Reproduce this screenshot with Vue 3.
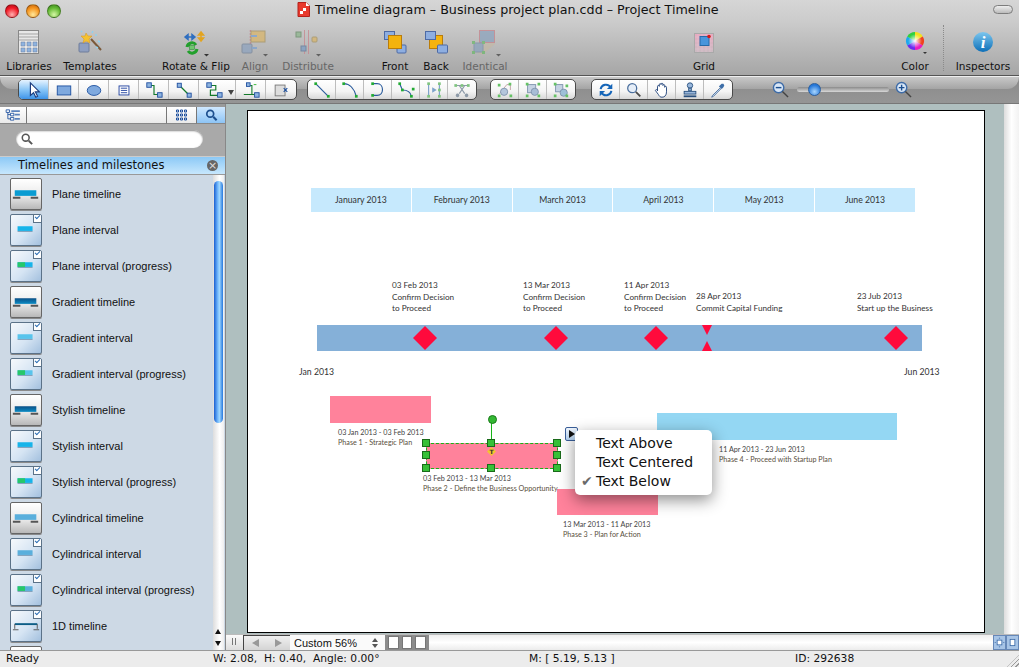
<template>
  <div class="window">
    <header class="toolbar">
      <div class="titlebar">
        <div class="lights">
          <span class="light red"></span>
          <span class="light orange"></span>
          <span class="light green"></span>
        </div>
        <div class="title">
          <svg class="doc" viewBox="0 0 13 15">
            <path d="M1 .5h8l3.500 3.500v10.500h-11.500z" fill="#e8392c" stroke="#b3201a" />
            <path d="M3 9h3v3h-3zM6 6h3v3h-3z" fill="#fff" />
            <path d="M9 .5v3.500h3.500z" fill="#fff" />
          </svg>
          <span>Timeline diagram – Business project plan.cdd – Project Timeline</span>
        </div>
        <span class="pill"></span>
      </div>

      <div class="tools">
        <div class="tool">
          <svg viewBox="0 0 32 28">
            <rect x="5.500" y="2.500" width="20" height="23" fill="#e8e8e8" stroke="#888" />
            <path d="M6 6h19M6 9h19M6 12h19" stroke="#a5a5a5" />
            <path d="M8 14h4v4h-4zM14 14h4v4h-4zM20 14h4v4h-4zM8 20h4v4h-4zM14 20h4v4h-4zM20 20h4v4h-4z" fill="#8eb3df" stroke="#6a7f9c" stroke-width=".5" />
          </svg>
          <span>Libraries</span>
        </div>
        <div class="tool">
          <svg viewBox="0 0 32 28">
            <rect x="5" y="15" width="10" height="9" rx="1" fill="#8f9fc0" stroke="#6e7d9b" />
            <path d="M17 11l10 11" stroke="#7b5a3a" stroke-width="2" />
            <path d="M12 5l2 3 4 0-3 3 1 4-4-2-3 2 1-4-3-3 4 0z" fill="#f5c230" stroke="#d8941d" stroke-width=".5" />
            <path d="M7 3l1 1M19 3l-1 2M24 13l2 1M21 7h2M22 19l2 1" stroke="#8fd2f0" stroke-width="1.500" />
          </svg>
          <span>Templates</span>
        </div>
        <div class="gap"></div>
        <div class="tool">
          <svg viewBox="0 0 32 28">
            <path d="M5 9h10M5 9l3-2.500v5zM15 9l-3-2.500v5z" stroke="#2f6fc0" fill="#2f6fc0" stroke-width="1.500" />
            <path d="M21 4v9M21 4l-2.500 3h5zM21 13l-2.500-3h5z" stroke="#e3a41f" fill="#f3c747" stroke-width="1.500" />
            <path d="M7 19a5 5 0 0 1 9-2M17 21a5 5 0 0 1-9 2" fill="none" stroke="#22a02c" stroke-width="3" />
            <rect x="9.500" y="17.500" width="5" height="4" fill="#6fc76f" stroke="#1e7f2a" stroke-width=".5" />
            <path d="M24 26h5l-2.500 2.500z" fill="#333" />
          </svg>
          <span>Rotate &amp; Flip</span>
        </div>
        <div class="tool off">
          <svg viewBox="0 0 32 28">
            <path d="M11.500 2v24" stroke="#c77a86" stroke-width="1.500" stroke-dasharray="2 1" />
            <rect x="12" y="3" width="14" height="11" fill="#d9b56b" stroke="#a5925f" />
            <rect x="3" y="16" width="10" height="9" rx="1" fill="#8ea3bf" stroke="#74849a" />
            <path d="M18 8h-6M13 20h5" stroke="#7ba0cf" stroke-width="2" />
            <path d="M24 26h5l-2.500 2.500z" fill="#444" />
          </svg>
          <span>Align</span>
        </div>
        <div class="tool off">
          <svg viewBox="0 0 32 28">
            <path d="M12.500 2v24M16.500 2v24" stroke="#c7858d" stroke-width="1" />
            <rect x="4" y="4" width="5" height="5" fill="#8db58d" stroke="#678a67" />
            <rect x="9" y="18" width="5" height="5" fill="#7d9cc3" stroke="#61799a" />
            <rect x="20" y="9" width="5" height="5" rx="1" fill="#d9b56b" stroke="#a5925f" />
            <path d="M24 26h5l-2.500 2.500z" fill="#444" />
          </svg>
          <span>Distribute</span>
        </div>
        <div class="gap"></div>
        <div class="tool">
          <svg viewBox="0 0 32 28">
            <rect x="5.500" y="3.500" width="10" height="8" fill="#8eaee0" stroke="#4d6aa5" />
            <rect x="18" y="17" width="9" height="8" rx="1" fill="#8eaee0" stroke="#4d6aa5" />
            <rect x="9.500" y="7.500" width="13" height="13" fill="#f4b30e" stroke="#b97c0a" />
          </svg>
          <span>Front</span>
        </div>
        <div class="tool">
          <svg viewBox="0 0 32 28">
            <rect x="9.500" y="7.500" width="13" height="13" fill="#f4b30e" stroke="#b97c0a" />
            <rect x="5.500" y="3.500" width="10" height="8" fill="#8eaee0" stroke="#4d6aa5" />
            <rect x="17.500" y="17" width="10" height="8" rx="1" fill="#8eaee0" stroke="#4d6aa5" />
          </svg>
          <span>Back</span>
        </div>
        <div class="tool off">
          <svg viewBox="0 0 32 28">
            <path d="M7 24L17 8h9v8L13 27z" fill="#c9b89a" opacity=".6" />
            <rect x="10.500" y="2.500" width="15" height="12" fill="#8ca3bd" stroke="#c4828a" />
            <rect x="5" y="15" width="9" height="9" fill="#8ca3bd" stroke="#7a8ea6" />
            <path d="M3 13h3v3h-3zM13 13h3v3h-3zM3 23h3v3h-3zM13 23h3v3h-3z" fill="#6cb76c" />
            <path d="M27 26h5l-2.500 2.500z" fill="#444" />
          </svg>
          <span>Identical</span>
        </div>
        <div class="gap"></div>
        <div class="tool">
          <svg viewBox="0 0 32 28">
            <defs>
              <linearGradient id="gridFade" x1="0" y1="0" x2="0" y2="1">
                <stop offset="0" stop-color="#e9a9c0" />
                <stop offset="1" stop-color="#c9bcc2" />
              </linearGradient>
            </defs>
            <rect x="6.500" y="5.500" width="19" height="19" fill="url(#gridFade)" stroke="#a9a9a9" />
            <path d="M7 9h18M7 13h18M7 17h18M7 21h18M10 6v18M14 6v18M18 6v18M22 6v18" stroke="#e6c2d0" stroke-width=".5" />
            <rect x="12" y="8.500" width="9" height="9" fill="#4a95dc" stroke="#276aa8" />
            <circle cx="21" cy="8.500" r="1.800" fill="#d01818" />
          </svg>
          <span>Grid</span>
        </div>
        <div class="gap"></div>
        <div class="tool">
          <svg viewBox="0 0 32 28">
            <defs>
              <radialGradient id="wheelWhite">
                <stop offset="0" stop-color="#fff" />
                <stop offset="1" stop-color="#fff" stop-opacity="0" />
              </radialGradient>
            </defs>
            <path d="M16 13V4a9 9 0 0 1 7.800 4.500z" fill="#f3e21d" />
            <path d="M16 13l7.800-4.500a9 9 0 0 1 0 9z" fill="#f0431d" />
            <path d="M16 13l7.800 4.500A9 9 0 0 1 16 22z" fill="#e71dbf" />
            <path d="M16 13v9a9 9 0 0 1-7.800-4.500z" fill="#6a2df0" />
            <path d="M16 13l-7.800 4.500a9 9 0 0 1 0-9z" fill="#1ea8ee" />
            <path d="M16 13L8.200 8.500A9 9 0 0 1 16 4z" fill="#2fd03f" />
            <circle cx="16" cy="13" r="7" fill="url(#wheelWhite)" />
            <path d="M24 24h4l-2 2z" fill="#333" />
          </svg>
          <span>Color</span>
        </div>
        <div class="divider"></div>
        <div class="tool">
          <svg viewBox="0 0 32 28">
            <defs>
              <linearGradient id="infoBlue" x1="0" y1="0" x2="0" y2="1">
                <stop offset="0" stop-color="#7cc6ee" />
                <stop offset="1" stop-color="#0d6fb8" />
              </linearGradient>
            </defs>
            <circle cx="16" cy="14" r="10" fill="url(#infoBlue)" />
            <text x="16" y="20" class="info-i">i</text>
          </svg>
          <span>Inspectors</span>
        </div>
      </div>
    </header>

    <nav class="strip">
      <div class="seg first">
        <button class="cell on">
          <svg viewBox="0 0 20 20"><path d="M6 2v14l3.500-3 2.500 5 2-1-2.500-5h4.500z" fill="#fff" stroke="#1f3f80" stroke-width="1.300" /></svg>
        </button>
        <button class="cell">
          <svg viewBox="0 0 20 20"><rect x="2.500" y="5.500" width="15" height="10" fill="#7fa9de" stroke="#1d4f9e" /></svg>
        </button>
        <button class="cell">
          <svg viewBox="0 0 20 20"><ellipse cx="10" cy="10.500" rx="7.500" ry="5.500" fill="#7fa9de" stroke="#1d4f9e" /></svg>
        </button>
        <button class="cell">
          <svg viewBox="0 0 20 20"><rect x="4.500" y="5.500" width="11" height="10" fill="#fff" stroke="#1d3f9e" /><path d="M6.500 8h7M6.500 10.500h7M6.500 13h7" stroke="#1d3f9e" /></svg>
        </button>
        <button class="cell">
          <svg viewBox="0 0 20 20"><path d="M5 5h5v10h6" fill="none" stroke="#137a2a" stroke-width="1.300" /><rect x="2" y="2" width="5" height="5" fill="#8fb4e0" stroke="#1f4f9f" /><rect x="14" y="13" width="5" height="5" fill="#8fb4e0" stroke="#1f4f9f" /></svg>
        </button>
        <button class="cell">
          <svg viewBox="0 0 20 20"><path d="M5 5l10 10" stroke="#137a2a" stroke-width="1.300" /><rect x="2.500" y="2.500" width="4.500" height="4.500" fill="#8fb4e0" stroke="#1f4f9f" /><rect x="13.500" y="13.500" width="4.500" height="4.500" fill="#8fb4e0" stroke="#1f4f9f" /></svg>
        </button>
        <button class="cell wide">
          <svg viewBox="0 0 20 20"><path d="M5 5h7v5h-6v6h9" fill="none" stroke="#137a2a" stroke-width="1.300" /><rect x="2" y="2" width="5" height="5" fill="#8fb4e0" stroke="#1f4f9f" /><rect x="14" y="13" width="5" height="5" fill="#8fb4e0" stroke="#1f4f9f" /></svg>
          <i class="drop"></i>
        </button>
        <button class="cell">
          <svg viewBox="0 0 20 20"><path d="M9 5h2v10h3M2 15h9" fill="none" stroke="#137a2a" stroke-width="1.200" /><rect x="5" y="2" width="4" height="4" fill="#8fb4e0" stroke="#1f4f9f" /><rect x="14" y="13" width="5" height="5" fill="#8fb4e0" stroke="#1f4f9f" /><path d="M13 4h3" stroke="#2cb52c" /></svg>
        </button>
        <button class="cell">
          <svg viewBox="0 0 20 20"><rect x="3.500" y="4.500" width="11" height="12" fill="#ddd" stroke="#777" /><path d="M13 8l4 4M17 8l-4 4" stroke="#1d4f9e" stroke-width="1.300" /></svg>
        </button>
      </div>

      <div class="seg second">
        <button class="cell small" v-for="t in lineTools" :key="t.d">
          <svg viewBox="0 0 20 20">
            <path :d="t.d" fill="none" :stroke="t.stroke" stroke-width="1.300" />
            <path v-if="t.extra" :d="t.extra" :fill="t.stroke" />
            <rect v-for="n in t.nodes" :key="n.join()" :x="n[0] - 1.500" :y="n[1] - 1.500" width="3" height="3" :fill="t.green" />
          </svg>
        </button>
      </div>

      <div class="seg third">
        <button class="cell small">
          <svg viewBox="0 0 20 20"><path d="M4 14L12 4h4v6" fill="none" stroke="#c0a0a0" /><circle cx="9" cy="12" r="4" fill="#b4c6dc" stroke="#7e93ad" /><path d="M2 3h3v3h-3zM14 2h3v3h-3zM2 15h3v3h-3zM15 15h3v3h-3z" fill="#66c266" /></svg>
        </button>
        <button class="cell small">
          <svg viewBox="0 0 20 20"><rect x="4" y="4" width="9" height="9" fill="#c6d3e4" stroke="#7e93ad" /><circle cx="12" cy="12" r="4" fill="#a8bdd6" stroke="#7e93ad" /><path d="M2 2h3v3h-3zM15 2h3v3h-3zM2 15h3v3h-3zM15 15h3v3h-3z" fill="#66c266" /></svg>
        </button>
        <button class="cell small">
          <svg viewBox="0 0 20 20"><rect x="4" y="4" width="8" height="8" fill="#c6d3e4" stroke="#7e93ad" /><circle cx="13" cy="13" r="4" fill="#9ec0d8" stroke="#7e93ad" /><path d="M2 2h3v3h-3zM15 4h3v3h-3zM2 15h3v3h-3zM15 15h3v3h-3z" fill="#66c266" /></svg>
        </button>
      </div>

      <div class="seg fourth">
        <button class="cell small">
          <svg viewBox="0 0 20 20"><path d="M4 9a6 6 0 0 1 11-2M16 11a6 6 0 0 1-11 2" fill="none" stroke="#1565b8" stroke-width="2.200" /><path d="M17 3v6h-6zM3 17v-6h6z" fill="#1565b8" /></svg>
        </button>
        <button class="cell small">
          <svg viewBox="0 0 20 20"><circle cx="8" cy="8" r="5" fill="#e6eef8" stroke="#4b6f9e" stroke-width="1.400" /><path d="M12 12l5 5" stroke="#4a4a4a" stroke-width="2" /></svg>
        </button>
        <button class="cell small">
          <svg viewBox="0 0 20 20"><path d="M5 11V6a1 1 0 0 1 2 0V4a1 1 0 0 1 2 0v-.500a1 1 0 0 1 2 0V5a1 1 0 0 1 2 0v2a1 1 0 0 1 2 0v5c0 4-2 6-5 6-2 0-3-1-4-3l-3-4c-1-1 1-2 2-1z" fill="#fff" stroke="#1d3f78" /></svg>
        </button>
        <button class="cell small">
          <svg viewBox="0 0 20 20"><circle cx="10" cy="5" r="3" fill="#9ab8dc" stroke="#28507f" /><path d="M8.500 8h3v3h-3z" fill="#9ab8dc" stroke="#28507f" /><rect x="3.500" y="11.500" width="13" height="3" fill="#9ab8dc" stroke="#28507f" /><rect x="3" y="16" width="14" height="2" fill="#28507f" /></svg>
        </button>
        <button class="cell small">
          <svg viewBox="0 0 20 20"><path d="M4 16l-1 2 2-1 8-8-1-1z" fill="#d6e4f4" stroke="#4a6f9e" /><path d="M11 6l3 3 1-1 1-1 1-2-1-2-2 0-2 2z" fill="#3d6ea8" /></svg>
        </button>
      </div>

      <div class="zoomer">
        <svg class="lens" viewBox="0 0 18 18"><circle cx="7" cy="7" r="5.500" fill="#d8e6f6" stroke="#3e6ca8" stroke-width="1.500" /><path d="M4 7h6" stroke="#1c4f90" stroke-width="1.500" /><path d="M11 11l6 6" stroke="#444" stroke-width="1.500" /></svg>
        <div class="slider"><span class="thumb"></span></div>
        <svg class="lens" viewBox="0 0 18 18"><circle cx="7" cy="7" r="5.500" fill="#d8e6f6" stroke="#3e6ca8" stroke-width="1.500" /><path d="M4 7h6M7 4v6" stroke="#1c4f90" stroke-width="1.500" /><path d="M11 11l6 6" stroke="#444" stroke-width="1.500" /></svg>
      </div>
    </nav>

    <main class="body">
      <aside class="sidebar">
        <div class="tabs">
          <div class="tab tree">
            <svg viewBox="0 0 18 14"><path d="M1 1h4v3h-4zM6 5h4v3h-4zM6 10h4v3h-4z" fill="#fff" stroke="#1d4f9e" /><path d="M3 4v7.500h3M3 6.500h3" fill="none" stroke="#1d4f9e" /><path d="M7 2.500h10M11 6.500h6M11 11.500h6" stroke="#5b82bd" stroke-width="2" /></svg>
          </div>
          <div class="tab grow"></div>
          <div class="tab grid">
            <svg viewBox="0 0 12 12"><path d="M1 1h2v2h-2zM5 1h2v2h-2zM9 1h2v2h-2zM1 5h2v2h-2zM5 5h2v2h-2zM9 5h2v2h-2zM1 9h2v2h-2zM5 9h2v2h-2zM9 9h2v2h-2z" fill="none" stroke="#1d4f9e" /></svg>
          </div>
          <div class="tab find">
            <svg viewBox="0 0 14 14"><circle cx="5.500" cy="5.500" r="4" fill="none" stroke="#1d4f8e" stroke-width="2" /><path d="M9 9l4 4" stroke="#1d4f8e" stroke-width="2.500" /></svg>
          </div>
        </div>
        <div class="searchbar">
          <div class="search">
            <svg viewBox="0 0 14 14"><circle cx="5.500" cy="5.500" r="4" fill="none" stroke="#555" stroke-width="1.800" /><path d="M9 9l4 4" stroke="#555" stroke-width="2.200" /></svg>
          </div>
        </div>
        <div class="lib-head">
          <span>Timelines and milestones</span>
          <i class="lib-close">×</i>
        </div>
        <div class="lib">
          <ul class="items">
            <li v-for="(item, i) in items" :key="i" class="item">
              <div class="tile" :class="item.kind">
                <svg viewBox="0 0 32 32">
                  <defs>
                    <linearGradient id="gradBar" x1="0" y1="0" x2="0" y2="1">
                      <stop offset="0" stop-color="#0a4f86" />
                      <stop offset="1" stop-color="#0d8cc4" />
                    </linearGradient>
                  </defs>
                  <template v-if="item.kind === 'timeline'">
                    <rect x="4" y="12" width="23" height="6" :fill="item.fill" />
                    <path d="M2 20h8M21 20h8" stroke="#555" stroke-width="2" />
                  </template>
                  <template v-else-if="item.kind === 'line'">
                    <path d="M4 14h24" stroke="#0c5d86" stroke-width="2" />
                    <path d="M4 14v5M28 14v5M2 20h6M24 20h6" stroke="#555" />
                  </template>
                  <template v-else>
                    <rect x="7" y="12" width="16" height="5" :fill="item.fill" />
                    <rect x="7" y="17" width="16" height="1" fill="#7a9ab5" />
                    <rect v-if="item.kind === 'progress'" x="7" y="12" width="8" height="5" fill="#27c76a" />
                  </template>
                </svg>
                <span v-if="item.kind !== 'timeline'" class="badge"></span>
              </div>
              <span v-if="item.name" class="item-name">{{ item.name }}</span>
            </li>
          </ul>
          <div class="vscroll">
            <div class="vtrack"><span class="vthumb"></span></div>
            <span class="arrow up"></span>
            <span class="arrow down"></span>
          </div>
        </div>
      </aside>

      <section class="work">
        <div class="stage-row">
          <div class="stage">
            <div class="page">
              <div class="months">
                <span v-for="m in months" :key="m">{{ m }}</span>
              </div>

              <div
                v-for="s in milestones"
                :key="s.x"
                class="note"
                :style="{ left: s.x - 248 + 'px', top: s.y - 111 + 'px' }"
              >
                <div v-for="l in s.lines" :key="l">{{ l }}</div>
              </div>

              <div class="band">
                <span v-for="x in diamonds" :key="x" class="diamond" :style="{ left: x - 317 - 12 + 'px' }"></span>
                <span class="tri top"></span>
                <span class="tri bottom"></span>
              </div>

              <div class="end-label start">Jan 2013</div>
              <div class="end-label end">Jun 2013</div>

              <div
                v-for="p in phases"
                :key="p.name"
                class="phase"
                :class="p.color"
                :style="{ left: p.x - 248 + 'px', top: p.y - 111 + 'px', width: p.w + 'px', height: p.h + 'px' }"
              ></div>
              <div
                v-for="p in phases"
                :key="p.name + 'l'"
                class="phase-label"
                :style="{ left: p.tx - 248 + 'px', top: p.ty - 111 + 'px' }"
              >
                <div>{{ p.date }}</div>
                <div class="phase-name">{{ p.name }}</div>
              </div>

              <div class="selection">
                <span class="rot-line"></span>
                <span class="rot-knob"></span>
                <span v-for="h in handles" :key="h" class="handle" :class="h"></span>
                <span class="text-mark">T</span>
              </div>

              <span class="menu-btn"></span>
              <div class="menu">
                <div class="menu-row">Text Above</div>
                <div class="menu-row">Text Centered</div>
                <div class="menu-row checked">Text Below</div>
              </div>
            </div>
          </div>
          <div class="rscroll"></div>
        </div>
        <div class="pagebar">
          <span class="pause"></span>
          <div class="pager">
            <span class="tri-l"></span>
            <span class="tri-r"></span>
          </div>
          <div class="zoomsel">
            <span>Custom 56%</span>
            <span class="updown"><i></i><i></i></span>
          </div>
          <div class="views"><i></i><i></i><i></i></div>
          <div class="hscroll"></div>
          <div class="fitbtn">
            <svg viewBox="0 0 14 14"><rect x="4" y="4" width="6" height="6" fill="#fff" stroke="#3465a4" /><path d="M7 1v1M7 12v1M1 7h1M12 7h1" stroke="#3465a4" stroke-width="1.500" /></svg>
          </div>
          <div class="fitbtn">
            <svg viewBox="0 0 14 14"><rect x="4" y="3" width="6" height="8" fill="#fff" stroke="#3465a4" /></svg>
          </div>
        </div>
      </section>
    </main>

    <footer class="status">
      <span>Ready</span>
      <span>W: 2.08,&nbsp; H: 0.40,&nbsp; Angle: 0.00°</span>
      <span>M: [ 5.19, 5.13 ]</span>
      <span>ID: 292638</span>
      <i class="grip"></i>
    </footer>
  </div>
</template>

<script setup>
const green = '#22aa33'
const pale = '#7fc47f'
const blueLine = '#2b5c9c'

const lineTools = [
  { d: 'M3 3l14 14', nodes: [[3, 3], [17, 17]], stroke: blueLine, green },
  { d: 'M3 3c7 0 12 6 14 14', nodes: [[3, 3], [17, 17]], stroke: blueLine, green },
  { d: 'M4 3h5c8 0 8 13 0 13h-5', nodes: [[4, 3], [4, 16]], stroke: blueLine, green },
  { d: 'M3 3l3 7c5 0 9 2 10 7', nodes: [[3, 3], [6, 10], [16, 17], [18, 9]], stroke: blueLine, green },
  {
    d: 'M4 3v14M16 3v14',
    extra: 'M8 7l5 3-5 3z',
    nodes: [[4, 3], [4, 17], [16, 3], [16, 10], [16, 17]],
    stroke: '#7fa3cc',
    green: pale
  },
  {
    d: 'M7 5l6 9M13 5l-6 9M3 5h14',
    extra: 'M5 14a2 2 0 1 0 .100 0zM15 14a2 2 0 1 0 .100 0z',
    nodes: [[3, 5], [17, 5], [10, 5]],
    stroke: '#8d9aa8',
    green: pale
  }
]

const plain = '#0a9cd2'
const light = '#16b4ea'
const grad = 'url(#gradBar)'
const cyl = '#5aafdc'

const items = [
  { name: 'Plane timeline', kind: 'timeline', fill: plain },
  { name: 'Plane interval', kind: 'interval', fill: light },
  { name: 'Plane interval (progress)', kind: 'progress', fill: light },
  { name: 'Gradient timeline', kind: 'timeline', fill: grad },
  { name: 'Gradient interval', kind: 'interval', fill: '#58c4ec' },
  { name: 'Gradient interval (progress)', kind: 'progress', fill: '#58c4ec' },
  { name: 'Stylish timeline', kind: 'timeline', fill: grad },
  { name: 'Stylish interval', kind: 'interval', fill: light },
  { name: 'Stylish interval (progress)', kind: 'progress', fill: light },
  { name: 'Cylindrical timeline', kind: 'timeline', fill: cyl },
  { name: 'Cylindrical interval', kind: 'interval', fill: cyl },
  { name: 'Cylindrical interval (progress)', kind: 'progress', fill: cyl },
  { name: '1D timeline', kind: 'line', fill: '' },
  // only the top edge of this one shows above the status bar
  { name: '', kind: 'timeline', fill: plain }
]

const months = ['January 2013', 'February 2013', 'March 2013', 'April 2013', 'May 2013', 'June 2013']

const milestones = [
  { x: 392, y: 280, lines: ['03 Feb 2013', 'Confirm Decision', 'to Proceed'] },
  { x: 523, y: 280, lines: ['13 Mar 2013', 'Confirm Decision', 'to Proceed'] },
  { x: 624, y: 280, lines: ['11 Apr 2013', 'Confirm Decision', 'to Proceed'] },
  { x: 696, y: 291, lines: ['28 Apr 2013', 'Commit Capital Funding'] },
  { x: 857, y: 291, lines: ['23 Jub 2013', 'Start up the Business'] }
]

const diamonds = [425, 556, 656, 896]

const phases = [
  { x: 330, y: 396, w: 101, h: 27, color: 'pink', tx: 338, ty: 428, date: '03 Jan 2013 - 03 Feb 2013', name: 'Phase 1 - Strategic Plan' },
  { x: 426, y: 443, w: 132, h: 26, color: 'pink', tx: 423, ty: 474, date: '03 Feb 2013 - 13 Mar 2013', name: 'Phase 2 - Define the Business Opportunity' },
  { x: 557, y: 489, w: 101, h: 26, color: 'pink', tx: 563, ty: 520, date: '13 Mar 2013 - 11 Apr 2013', name: 'Phase 3 - Plan for Action' },
  { x: 657, y: 413, w: 240, h: 27, color: 'blue', tx: 719, ty: 445, date: '11 Apr 2013 - 23 Jun 2013', name: 'Phase 4 - Proceed with Startup Plan' }
]

const handles = ['tl', 'tc', 'tr', 'ml', 'mr', 'bl', 'bc', 'br']
</script>

<style>
html,
body {
  margin: 0;
  background: #9a9a9a;
  overflow: hidden;
}
</style>

<style scoped>
.window {
  width: 1019px;
  height: 667px;
  display: flex;
  flex-direction: column;
  font-family: "DejaVu Sans", "Liberation Sans", sans-serif;
  color: #111;
  overflow: hidden;
}

/* top chrome */
.toolbar {
  height: 76px;
  flex: none;
  background: linear-gradient(#d6d6d6, #cbcbcb 30%, #a6a6a6);
  border-bottom: 1px solid #555;
  box-sizing: border-box;
}

.titlebar {
  height: 22px;
  display: flex;
  align-items: center;
  position: relative;
}

.lights {
  display: flex;
  gap: 7px;
  padding-left: 5px;
}

.light {
  width: 14px;
  height: 14px;
  border-radius: 50%;
  border: 1px solid rgba(0, 0, 0, 0.3);
  box-sizing: border-box;
}

.red { background: radial-gradient(circle at 50% 80%, #ffb0b0, #f01824 60%, #a50f18); }
.orange { background: radial-gradient(circle at 50% 80%, #ffe89a, #f5921a 60%, #bb600f); }
.green { background: radial-gradient(circle at 50% 80%, #d5f7a5, #62b832 60%, #3c8420); }

.title {
  position: absolute;
  left: 297px;
  top: 2px;
  display: flex;
  align-items: center;
  gap: 5px;
  font-size: 12.700px;
  white-space: nowrap;
}

.doc {
  width: 13px;
  height: 15px;
}

.pill {
  position: absolute;
  right: 6px;
  top: 5px;
  width: 20px;
  height: 9px;
  box-sizing: border-box;
  border: 1px solid #7d7d7d;
  border-radius: 5px;
  background: linear-gradient(#eee, #bbb);
}

.tools {
  display: grid;
  grid-template-columns: 58px 64px 34px 80px 38px 68px 33px 40px 42px 56px 161px 60px 156px 50px 7px 72px;
  height: 53px;
  font-size: 10.500px;
}

.tool {
  display: flex;
  flex-direction: column;
  align-items: center;
  white-space: nowrap;
  padding-top: 6px;
  box-sizing: border-box;
}

.tool svg {
  width: 32px;
  height: 28px;
  flex: none;
  overflow: visible;
}

.tool span {
  margin-top: 4px;
  line-height: 13px;
}

.divider {
  margin: 3px 0 4px 3px;
  width: 0;
  border-left: 1px dotted #8a8a8a;
}

.off {
  color: #666;
}

.off svg {
  opacity: 0.75;
}

.info-i {
  font: italic bold 17px "Liberation Serif", serif;
  fill: #fff;
  text-anchor: middle;
}

/* second toolbar */
.strip {
  height: 28px;
  flex: none;
  position: relative;
  display: flex;
  align-items: flex-start;
  padding: 2px 0 0 18px;
  box-sizing: border-box;
  background: linear-gradient(#8a8a8a, #959595);
  border-top: 1px solid #eee;
  border-bottom: 1px solid #777;
}

/* the lighter band that curves in at both ends */
.strip::before {
  content: "";
  position: absolute;
  left: 0;
  right: 0;
  top: 0;
  height: 12px;
  border-radius: 0 0 16px 16px;
  background: linear-gradient(#c8c8c8, #a4a4a4);
}

.seg {
  display: flex;
  height: 19px;
  border: 1px solid #4a4a4a;
  border-radius: 5px;
  background: linear-gradient(#fff, #f4f4f4 60%, #d8d8d8);
  overflow: hidden;
  flex: none;
  position: relative;
}

.second { margin-left: 10px; }
.third { margin-left: 13px; }
.fourth { margin-left: 15px; }

.cell {
  width: 30px;
  height: 19px;
  padding: 0;
  border: 0;
  border-right: 1px solid #bdbdbd;
  background: none;
  display: flex;
  align-items: center;
  justify-content: center;
  position: relative;
  flex: none;
}

.cell:last-child {
  border-right: 0;
}

.cell svg {
  width: 18px;
  height: 18px;
}

.cell.small {
  width: 28px;
}

.cell.wide {
  width: 37px;
  justify-content: flex-start;
  padding-left: 6px;
  box-sizing: border-box;
}

.cell.on {
  background: linear-gradient(#e6f3ff, #82c2f6 55%, #3f94e8);
}

.drop {
  position: absolute;
  right: 1px;
  bottom: 4px;
  border: 3.500px solid transparent;
  border-top: 5px solid #444;
  border-bottom: 0;
}

.zoomer {
  display: flex;
  align-items: center;
  margin-left: 39px;
  height: 21px;
  position: relative;
}

.lens {
  width: 17px;
  height: 17px;
  overflow: visible;
}

.slider {
  width: 92px;
  height: 5px;
  margin: 0 6px 0 8px;
  border-radius: 3px;
  background: linear-gradient(#8a8a8a, #d8d8d8);
  position: relative;
}

.thumb {
  position: absolute;
  left: 11px;
  top: -4px;
  width: 13px;
  height: 13px;
  border-radius: 50%;
  background: radial-gradient(circle at 50% 70%, #a8d6ff, #2476d8 70%);
  border: 1px solid #2b5f9f;
  box-sizing: border-box;
}

/* body */
.body {
  flex: 1;
  display: flex;
  min-height: 0;
}

.sidebar {
  width: 226px;
  flex: none;
  display: flex;
  flex-direction: column;
  border-right: 1px solid #888;
  box-sizing: border-box;
}

.tabs {
  display: flex;
  height: 20px;
  flex: none;
  padding-top: 3px;
  box-sizing: border-box;
  background: #9a9a9a;
}

.tab {
  background: linear-gradient(#fff, #eaeaea);
  border-right: 1px solid #777;
  border-bottom: 1px solid #888;
  display: flex;
  align-items: center;
  justify-content: center;
  box-sizing: border-box;
}

.tab svg { width: 13px; height: 12px; }
.tree { width: 27px; }
.tree svg { width: 16px; }
.grow { flex: 1; }
.grid { width: 30px; }
.find { width: 28px; background: linear-gradient(#cfe8ff, #8dc4f5); border-right: 0; }

.searchbar {
  height: 32px;
  flex: none;
  background: #a9a9a9;
  padding: 6px 16px 0 16px;
  box-sizing: border-box;
}

.search {
  height: 18px;
  width: 187px;
  border-radius: 9px;
  background: #fff;
  box-shadow: inset 0 1px 2px #888;
  display: flex;
  align-items: center;
  padding-left: 5px;
  box-sizing: border-box;
}

.search svg { width: 12px; height: 12px; }

.lib-head {
  height: 19px;
  flex: none;
  background: linear-gradient(#8cc9f6, #c7e7fd);
  border-top: 1px solid #ccc;
  border-bottom: 1px solid #999;
  box-sizing: border-box;
  font-size: 11.500px;
  line-height: 16px;
  padding-left: 18px;
  position: relative;
}

.lib-close {
  position: absolute;
  right: 7px;
  top: 3px;
  width: 11px;
  height: 11px;
  border-radius: 50%;
  background: #666;
  color: #ddd;
  font: normal 11px/11px "DejaVu Sans", sans-serif;
  text-align: center;
}

.lib {
  flex: 1;
  min-height: 0;
  display: flex;
  background: #cdd9e5;
  overflow: hidden;
}

.items {
  list-style: none;
  margin: 0;
  padding: 3px 0 0 10px;
  flex: 1;
  min-width: 0;
}

.item {
  height: 36px;
  display: flex;
  align-items: flex-start;
}

.tile {
  width: 32px;
  height: 32px;
  box-sizing: border-box;
  border: 1px solid #666;
  border-radius: 2px;
  background: linear-gradient(#fff, #eaeaea 55%, #b8b8b8);
  position: relative;
  flex: none;
  box-shadow: 0 1px 0 #8a8a8a;
}

.tile.interval,
.tile.progress,
.tile.line {
  background: linear-gradient(135deg, #f6f9fc, #d5e4f3 55%, #a3c0de);
  border-color: #5b7288;
}

.tile svg {
  width: 100%;
  height: 100%;
  display: block;
}

.badge {
  position: absolute;
  right: 0;
  top: 0;
  width: 7px;
  height: 7px;
  background: #fff;
  border-left: 1px solid #5b7288;
  border-bottom: 1px solid #5b7288;
}

.badge::after {
  content: "";
  position: absolute;
  left: 1px;
  top: 0;
  width: 4px;
  height: 2px;
  border-left: 1px solid #2d6fb5;
  border-bottom: 1px solid #2d6fb5;
  transform: rotate(-45deg);
}

.item-name {
  margin-left: 10px;
  font-family: "Liberation Sans", Arial, sans-serif;
  font-size: 11px;
  line-height: 32px;
  white-space: nowrap;
}

.vscroll {
  width: 11px;
  flex: none;
  margin-right: 1px;
  display: flex;
  flex-direction: column;
  background: linear-gradient(90deg, #ddd, #fff 60%, #eee);
}

.vtrack {
  flex: 1;
  padding-top: 6px;
}

.vthumb {
  display: block;
  width: 9px;
  height: 242px;
  margin-left: 1px;
  border-radius: 5px;
  background: linear-gradient(90deg, #1a5fd0, #6fb6fb 40%, #a0d8ff 60%, #2577dd);
}

.arrow {
  height: 12px;
  display: block;
  position: relative;
}

.arrow::after {
  content: "";
  position: absolute;
  left: 2px;
  top: 3px;
  border: 3px solid transparent;
}

.up::after { border-bottom: 5px solid #111; border-top: 0; }
.down::after { border-top: 5px solid #111; border-bottom: 0; }

/* canvas */
.work {
  flex: 1;
  display: flex;
  flex-direction: column;
  min-width: 0;
}

.stage-row {
  flex: 1;
  display: flex;
  min-height: 0;
}

.stage {
  flex: 1;
  background: #afbfbf;
  padding: 6px 0 0 21px;
  min-width: 0;
}

.rscroll {
  width: 15px;
  flex: none;
  background: linear-gradient(90deg, #dcdcdc, #fff 50%, #f2f2f2);
}

.page {
  width: 738px;
  height: 523px;
  box-sizing: border-box;
  border: 1px solid #000;
  background: #fff;
  position: relative;
  font-family: Lato, "Open Sans", sans-serif;
  color: #333;
  font-size: 8.200px;
}

.months {
  position: absolute;
  left: 63px;
  top: 77px;
  width: 604px;
  height: 24px;
  display: flex;
  gap: 1px;
  font-size: 8.700px;
}

.months span {
  flex: 1;
  background: #c6e9fd;
  text-align: center;
  line-height: 24px;
}

.note {
  position: absolute;
  line-height: 11.500px;
  white-space: pre;
}

.band {
  position: absolute;
  left: 69px;
  top: 214px;
  width: 605px;
  height: 26px;
  background: #85b0d8;
  overflow: hidden;
}

.diamond {
  position: absolute;
  top: 1px;
  width: 24px;
  height: 24px;
  background: #ff0a3c;
  clip-path: polygon(50% 0, 100% 50%, 50% 100%, 0 50%);
}

.tri {
  position: absolute;
  left: 385px;
  width: 10px;
  height: 10px;
  background: #ff0a3c;
}

.tri.top {
  top: 0;
  clip-path: polygon(0 0, 100% 0, 50% 100%);
}

.tri.bottom {
  bottom: 0;
  clip-path: polygon(50% 0, 100% 100%, 0 100%);
}

.end-label {
  position: absolute;
  top: 255px;
  line-height: 12px;
  font-size: 8.700px;
}

.start { left: 51px; }
.end { left: 656px; }

.phase {
  position: absolute;
}

.pink { background: #ff829b; }
.blue { background: #94d7f3; }

.phase-label {
  position: absolute;
  font-size: 7.200px;
  line-height: 9.800px;
  white-space: nowrap;
  color: #444;
}

.phase-name {
  color: #5a5040;
}

.selection {
  position: absolute;
  left: 178px;
  top: 332px;
  width: 132px;
  height: 26px;
  border: 1.500px dashed #16b316;
  box-sizing: border-box;
}

.rot-line {
  position: absolute;
  left: 64px;
  top: -25px;
  width: 1px;
  height: 25px;
  background: #16b316;
}

.rot-knob {
  position: absolute;
  left: 61px;
  top: -29px;
  width: 7px;
  height: 7px;
  border-radius: 50%;
  background: #34b834;
  border: 1px solid #1a7a1a;
}

.handle {
  position: absolute;
  width: 6px;
  height: 6px;
  background: #37c037;
  border: 1px solid #1a6a1a;
}

.tl { left: -5px; top: -5px; }
.tc { left: 60px; top: -5px; }
.tr { left: 126px; top: -5px; }
.ml { left: -5px; top: 7px; }
.mr { left: 126px; top: 7px; }
.bl { left: -5px; top: 20px; }
.bc { left: 60px; top: 20px; }
.br { left: 126px; top: 20px; }

.text-mark {
  position: absolute;
  left: 60px;
  top: 3px;
  width: 9px;
  height: 9px;
  background: #f4c430;
  clip-path: polygon(50% 0, 100% 50%, 50% 100%, 0 50%);
  font: bold 6px/9px "DejaVu Sans", sans-serif;
  text-align: center;
  color: #333;
}

.menu-btn {
  position: absolute;
  left: 317px;
  top: 316px;
  width: 13px;
  height: 14px;
  border: 1px solid #3a5f9a;
  border-radius: 2px;
  background: linear-gradient(#f2f8ff, #b6d4f2);
  box-sizing: border-box;
}

.menu-btn::after {
  content: "";
  position: absolute;
  left: 3px;
  top: 2px;
  border: 4px solid transparent;
  border-left: 6px solid #111;
  border-right: 0;
}

.menu {
  position: absolute;
  left: 327px;
  top: 319px;
  width: 137px;
  height: 65px;
  box-sizing: border-box;
  padding-top: 4px;
  background: #fff;
  border-radius: 5px;
  box-shadow: 0 5px 16px rgba(0, 0, 0, 0.45);
  font: 14px/19px "DejaVu Sans", sans-serif;
  color: #111;
}

.menu-row {
  padding-left: 21px;
  white-space: nowrap;
  position: relative;
}

.checked::before {
  content: "✔";
  position: absolute;
  left: 6px;
  color: #6a6a6a;
  font-size: 14px;
}

/* bar under the canvas */
.pagebar {
  height: 16px;
  flex: none;
  display: flex;
  align-items: stretch;
  background: linear-gradient(#eee, #fff 50%, #ececec);
  border-top: 1px solid #bbb;
  box-sizing: border-box;
}

.pause {
  width: 17px;
  position: relative;
  background: linear-gradient(#fafafa, #ddd);
}

.pause::after {
  content: "";
  position: absolute;
  left: 6px;
  top: 3px;
  width: 2px;
  height: 7px;
  border-left: 1px solid #777;
  border-right: 1px solid #777;
}

.pager {
  width: 47px;
  display: flex;
  align-items: center;
  justify-content: space-around;
  border-left: 1px solid #444;
  border-top: 1px solid #444;
  background: linear-gradient(#f0f0f0, #d4d4d4);
  box-sizing: border-box;
}

.tri-l {
  border: 4px solid transparent;
  border-right: 7px solid #999;
  border-left: 0;
}

.tri-r {
  border: 4px solid transparent;
  border-left: 7px solid #999;
  border-right: 0;
}

.zoomsel {
  width: 95px;
  display: flex;
  align-items: center;
  justify-content: space-between;
  padding: 0 7px 0 4px;
  box-sizing: border-box;
  font-family: "Liberation Sans", Arial, sans-serif;
  font-size: 11px;
  background: #fafafa;
}

.updown {
  display: flex;
  flex-direction: column;
  gap: 2px;
}

.updown i {
  border: 3px solid transparent;
  border-bottom: 4px solid #555;
  border-top: 0;
}

.updown i + i {
  border-top: 4px solid #555;
  border-bottom: 0;
}

.views {
  width: 44px;
  display: flex;
  gap: 3px;
  padding: 1px 3px;
  box-sizing: border-box;
  background: #8c8c8c;
}

.views i {
  flex: 1;
  background: #fff;
  border: 1px solid #777;
}

.hscroll {
  flex: 1;
}

.fitbtn {
  width: 13px;
  background: #a7c4e6;
  border: 1px solid #6688b8;
  box-sizing: border-box;
  display: flex;
  align-items: center;
}

.fitbtn svg {
  width: 100%;
}

/* status */
.status {
  height: 17px;
  flex: none;
  display: grid;
  grid-template-columns: 207px 316px 266px 1fr;
  padding-left: 6px;
  padding-bottom: 1px;
  align-items: center;
  background: #ececec;
  border-top: 1px solid #999;
  box-sizing: border-box;
  font-size: 10.700px;
  position: relative;
}

.grip {
  position: absolute;
  right: 0;
  bottom: 0;
  width: 12px;
  height: 12px;
  background: repeating-linear-gradient(135deg, transparent 0 2px, #999 2px 3px);
  clip-path: polygon(100% 0, 100% 100%, 0 100%);
}
</style>
